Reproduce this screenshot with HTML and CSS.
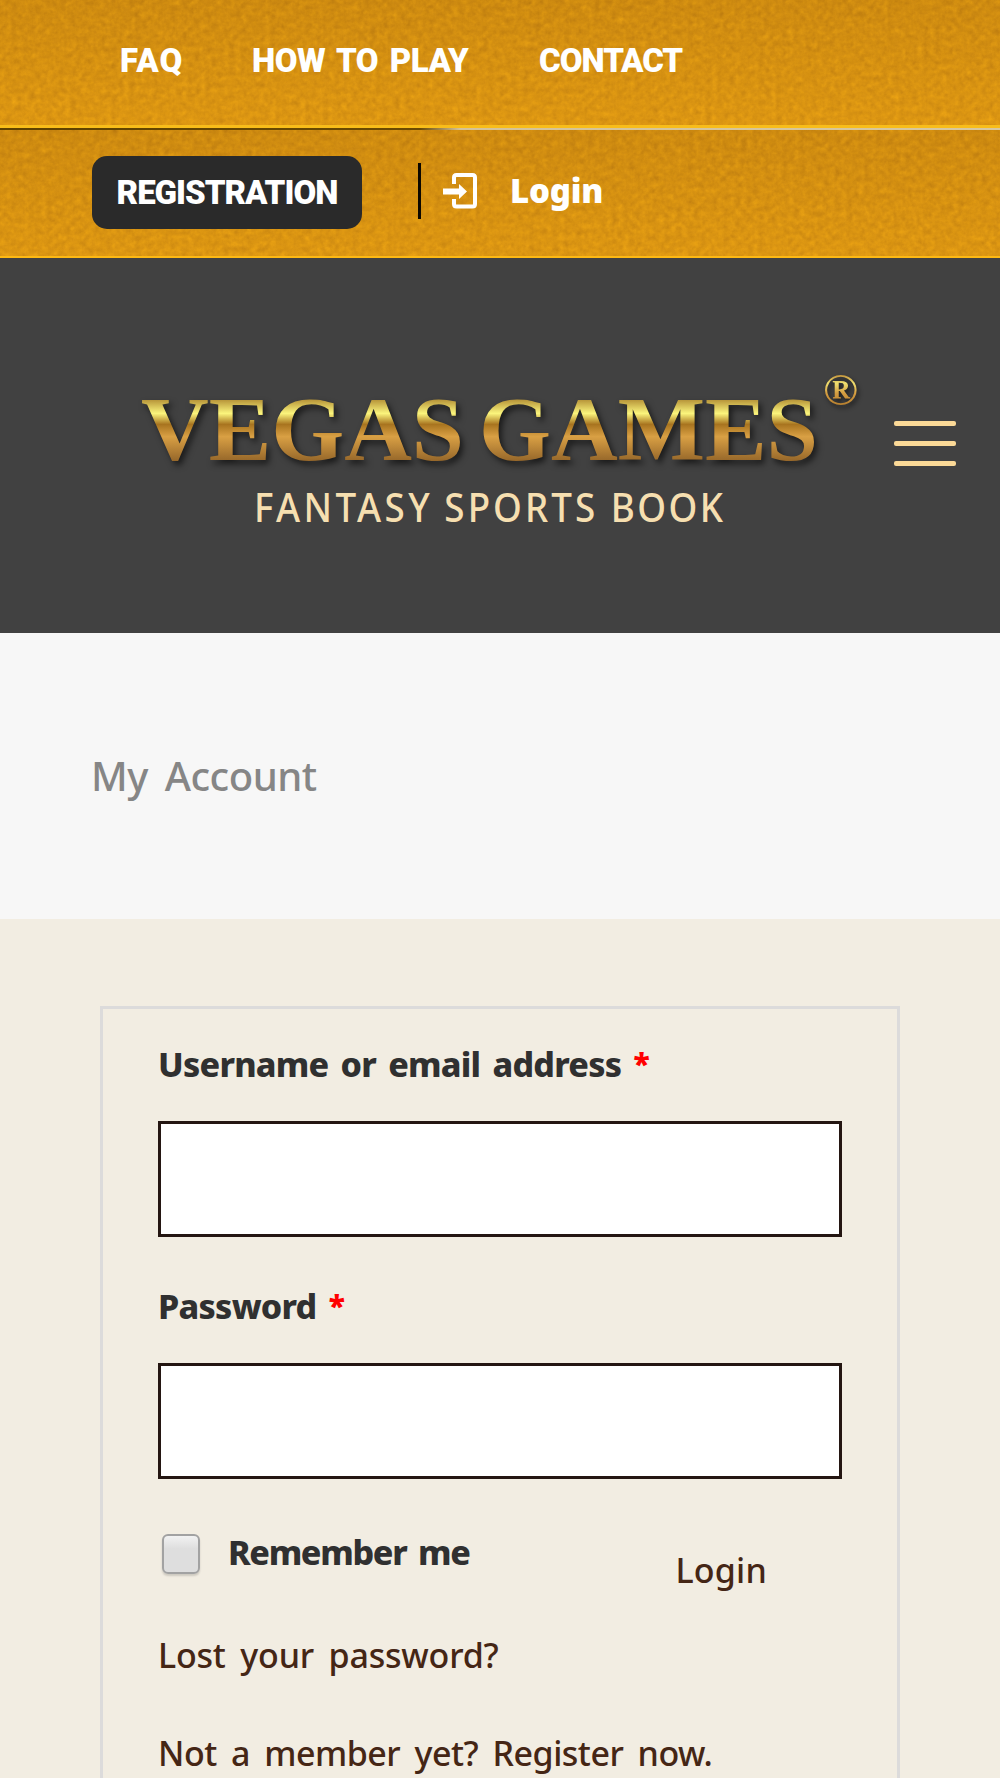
FILE: index.html
```html
<!doctype html>
<html lang="en">
<head>
    <meta charset="UTF-8">
    <meta name="viewport" content="width=device-width, initial-scale=1.0">
    <title>My Account - Vegas Games</title>
    <link rel="stylesheet" href="styles.css">
</head>
<body>
<div class="topbar">
    <!-- gold grain -->
    <svg class="grain" width="1000" height="258">
        <filter id="noise" x="0" y="0" width="100%" height="100%" color-interpolation-filters="sRGB">
            <feTurbulence type="fractalNoise" baseFrequency="0.17" numOctaves="3" seed="11"/>
            <feColorMatrix values="0.13 0.13 0 0 0.715  0.11 0.11 0 0 0.465  0.02 0 0 0 0.06  0 0 0 0 1"/>
        </filter>
        <rect width="1000" height="258" filter="url(#noise)"/>
    </svg>
    <nav class="top-row top-menu">
        <a class="top-link faq">FAQ</a>
        <a class="top-link how">HOW TO PLAY</a>
        <a class="top-link contact">CONTACT</a>
    </nav>
    <div class="top-line"></div>
    <div class="top-row top-user">
        <a class="register">REGISTRATION</a>
        <span class="divider"></span>
        <svg class="login-icon" width="34" height="36" viewBox="0 0 34 36">
            <path d="M11 11V4.500Q11 2 13.500 2H29.500Q32 2 32 4.500V31Q32 33.500 29.500 33.500H13.500Q11 33.500 11 31V26" fill="none" stroke="#fff" stroke-width="4"/>
            <path d="M0 15.500H16V11L24 18.500L16 26V21.500H0Z" fill="#fff"/>
        </svg>
        <a class="top-login">Login</a>
    </div>
</div>
<header class="header">
    <svg class="logo" width="740" height="180" viewBox="130 360 740 180">
        <defs>
            <linearGradient id="gold" gradientUnits="userSpaceOnUse" x1="0" y1="400" x2="0" y2="461">
                <stop offset="0" stop-color="#b8963a"/>
                <stop offset="0.22" stop-color="#fbf57c"/>
                <stop offset="0.4" stop-color="#a8741f"/>
                <stop offset="0.6" stop-color="#d9a044"/>
                <stop offset="1" stop-color="#96672a"/>
            </linearGradient>
            <linearGradient id="goldSmall" gradientUnits="userSpaceOnUse" x1="0" y1="373" x2="0" y2="407">
                <stop offset="0" stop-color="#b8812f"/>
                <stop offset="0.3" stop-color="#f0e070"/>
                <stop offset="0.6" stop-color="#d49c40"/>
                <stop offset="1" stop-color="#b07a2c"/>
            </linearGradient>
        </defs>
        <g class="brand" fill="url(#gold)">
            <text x="141" y="460" textLength="323" lengthAdjust="spacingAndGlyphs">VEGAS</text>
            <text x="479" y="460" textLength="339" lengthAdjust="spacingAndGlyphs">GAMES</text>
        </g>
        <text class="reg" x="823" y="405" textLength="35" lengthAdjust="spacingAndGlyphs" fill="url(#goldSmall)">®</text>
        <!-- tagline is slightly condensed and tracked out -->
        <g class="tagline" transform="scale(.92 1)">
            <text x="276" y="522" textLength="191">FANTASY</text>
            <text x="483" y="522" textLength="164">SPORTS</text>
            <text x="664" y="522" textLength="122">BOOK</text>
        </g>
    </svg>
    <div class="menu-btn">
        <span></span>
        <span></span>
        <span></span>
    </div>
</header>
<div class="title">My Account</div>
<div class="content">
    <form class="login-form">
        <label class="label" for="username">Username or email address <span class="required">*</span></label>
        <input class="field" type="text" id="username">
        <label class="label" for="password">Password <span class="required">*</span></label>
        <input class="field" type="password" id="password">
        <div class="form-row">
            <span class="checkbox"></span>
            <span class="label remember">Remember me</span>
            <a class="link submit">Login</a>
        </div>
        <a class="link lost">Lost your password?</a>
        <a class="link member">Not a member yet? Register now.</a>
    </form>
</div>
</body>
</html>
```
FILE: styles.css
```css
*{ box-sizing: border-box; }
body{ margin: 0; height: 1778px; font-family: "Noto Sans", sans-serif; background: #f2ede2; display: flex; flex-direction: column; }
.topbar{ position: relative; height: 258px; flex: none; background: #d89614; color: #fff; }
.grain{ position: absolute; left: 0; top: 0; }
.top-row{ position: relative; display: flex; }
.top-menu{ height: 125px; padding: 36px 0 0 120px; background: linear-gradient(rgba(160,100,10,.18), rgba(240,165,20,.2)); }
.top-link, .register{ font-family: Roboto, sans-serif; font-weight: 900; font-size: 33px; line-height: 50px; white-space: nowrap; }
.faq{ width: 132px; letter-spacing: 1.2px; }
.how{ width: 287px; letter-spacing: -.5px; word-spacing: 4px; }
.contact{ letter-spacing: -1px; }
.top-line{ position: relative; height: 5px; background: linear-gradient(90deg, #5e4100 0, #6b4a02 42%, #d3c29a 46%, #d6c7a0 100%); border-top: 3px solid #f8bd1a; }
.top-user{ height: 128px; padding: 26px 0 0 92px; align-items: flex-start; background: linear-gradient(rgba(160,100,10,.18), rgba(240,165,20,.2)); border-bottom: 2px solid #fdb913; }
.register{ width: 270px; height: 73px; line-height: 73px; text-align: center; background: #2a2a2a; border-radius: 15px; letter-spacing: -1px; }
.divider{ width: 3px; height: 56px; margin: 7px 0 0 56px; background: #0c0800; }
.login-icon{ margin: 17px 0 0 22px; }
.top-login{ margin: 10px 0 0 33px; font-weight: 900; font-size: 33px; line-height: 50px; letter-spacing: -.2px; }
.header{ height: 375px; flex: none; display: flex; align-items: flex-start; background: #414141; padding: 102px 0 0 130px; }
.logo{ flex: none; }
.brand{ font: bold 90px "Liberation Serif", serif; filter: drop-shadow(3px 4px 3px rgba(0,0,0,.6)); }
.reg{ font: bold 44px "Liberation Serif", serif; filter: drop-shadow(2px 3px 2px rgba(0,0,0,.6)); }
.tagline{ font: 500 40px "Noto Sans", sans-serif; fill: #f6dfb0; }
.menu-btn{ width: 62px; margin: 61px 0 0 24px; display: flex; flex-direction: column; gap: 15px; }
.menu-btn span{ height: 5px; border-radius: 2px; background: #fbd997; }
.title{ height: 286px; flex: none; padding: 114px 0 0 91px; background: #f7f7f7; color: #868686; font-weight: 500; font-size: 40px; line-height: 58px; word-spacing: 7px; letter-spacing: -.5px; }
.content{ flex: 1; min-height: 0; padding: 87px 100px 0; }
.login-form{ height: 100%; padding: 30px 55px 0; border: 3px solid #dcdbdb; border-bottom: 0; display: flex; flex-direction: column; overflow: hidden; }
.label{ height: 50px; font-weight: 800; font-size: 34px; line-height: 50px; color: #303030; letter-spacing: -.75px; word-spacing: 4px; white-space: nowrap; }
.required{ color: #f00; font-weight: 900; font-size: 30px; line-height: 1; vertical-align: 2px; }
.field{ width: 684px; height: 116px; flex: none; margin: 32px 0 44px; padding: 0 20px; border: 3px solid #241612; border-radius: 0; background: #fff; font-size: 32px; }
.form-row{ display: flex; align-items: flex-start; margin-top: 4px; height: 69px; flex: none; }
.checkbox{ width: 38px; height: 40px; margin: 7px 0 0 4px; border: 2px solid #a2a2a2; border-radius: 6px; background: linear-gradient(#f2f2f2, #dedede 35%, #dedede); box-shadow: 0 2px 2px rgba(0,0,0,.15); }
.remember{ margin-left: 28px; letter-spacing: -1.3px; }
.link{ height: 50px; font-weight: 500; font-size: 34px; line-height: 48px; color: #452615; white-space: nowrap; letter-spacing: -.2px; word-spacing: 6px; }
.submit{ margin: 19px 75px 0 auto; letter-spacing: .2px; }
.lost{ margin-top: 35px; }
.member{ height: 49px; margin-top: 48px; letter-spacing: -.5px; }
```
